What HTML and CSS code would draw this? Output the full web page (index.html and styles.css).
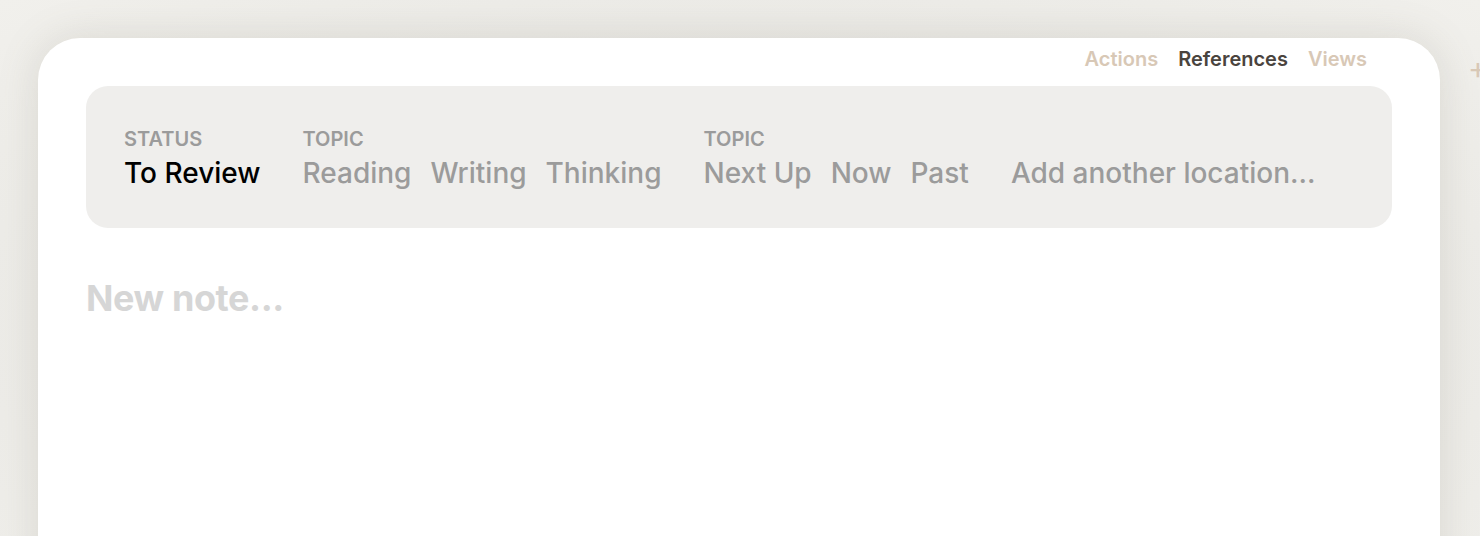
FILE: index.html
```html
<!DOCTYPE html>
<html lang="en">
<head>
    <meta charset="UTF-8">
    <meta name="viewport" content="width=device-width, initial-scale=1.0">
    <title>Notes</title>
    <link rel="stylesheet" href="styles.css">
</head>
<body>

<div class="page">
    <!-- main card -->
    <div class="card">
        <div class="tabs">
            <span class="tab">Actions</span>
            <span class="tab active">References</span>
            <span class="tab">Views</span>
        </div>

        <!-- filter locations -->
        <div class="filters">
            <div class="group">
                <div class="group-label">STATUS</div>
                <div class="group-items">
                    <span class="item selected">To Review</span>
                </div>
            </div>
            <div class="group">
                <div class="group-label">TOPIC</div>
                <div class="group-items">
                    <span class="item">Reading</span>
                    <span class="item">Writing</span>
                    <span class="item">Thinking</span>
                </div>
            </div>
            <div class="group">
                <div class="group-label">TOPIC</div>
                <div class="group-items">
                    <span class="item">Next Up</span>
                    <span class="item">Now</span>
                    <span class="item">Past</span>
                </div>
            </div>
            <div class="group">
                <div class="group-label">&nbsp;</div>
                <div class="group-items">
                    <span class="item">Add another location...</span>
                </div>
            </div>
        </div>

        <div class="new-note">New note...</div>
    </div>

    <span class="add-card">+</span>
</div>

</body>
</html>
```

FILE: styles.css
```css
body {
    margin: 0;
    height: 100vh;
    overflow: hidden;
    font-family: Inter, "Noto Sans", sans-serif;
    background: radial-gradient(ellipse at 50% 60%, #e4e3df 0%, #ebeae6 60%, #f1f0ec 100%);
}

.page {
    position: relative;
    height: 100%;
    overflow: hidden;
    padding: 38px 40px 0 38px;
    box-sizing: border-box;
}

/* card */
.card {
    background: #fff;
    border-radius: 42px;
    height: 600px;
    padding: 0 48px;
    box-shadow: 0 0 40px rgba(120, 115, 100, 0.18);
}

.tabs {
    display: flex;
    justify-content: flex-end;
    gap: 20px;
    padding: 9px 25px 0 0;
    height: 48px;
    box-sizing: border-box;
}

.tab {
    font-size: 20px;
    line-height: 24px;
    font-weight: 600;
    color: #d8c8b6;
}

.tab.active {
    color: #4a443e;
}

/* filter box */
.filters {
    display: flex;
    gap: 42px;
    background: #efeeec;
    border-radius: 22px;
    padding: 40px 38px 0;
    height: 142px;
    box-sizing: border-box;
}

.group-label {
    font-size: 20px;
    font-weight: 600;
    color: #9b9b9b;
    line-height: 26px;
}

.group-items {
    display: flex;
    gap: 19px;
    margin-top: 4px;
}

.item {
    font-size: 28px;
    font-weight: 500;
    color: #9b9b9b;
    line-height: 34px;
}

.item.selected {
    color: #000;
}

.new-note {
    margin-top: 48px;
    font-size: 36px;
    font-weight: 700;
    letter-spacing: -0.4px;
    color: #d6d6d6;
}

.add-card {
    position: absolute;
    left: 1468px;
    top: 50px;
    font-size: 30px;
    color: #d8c8b6;
}
```
